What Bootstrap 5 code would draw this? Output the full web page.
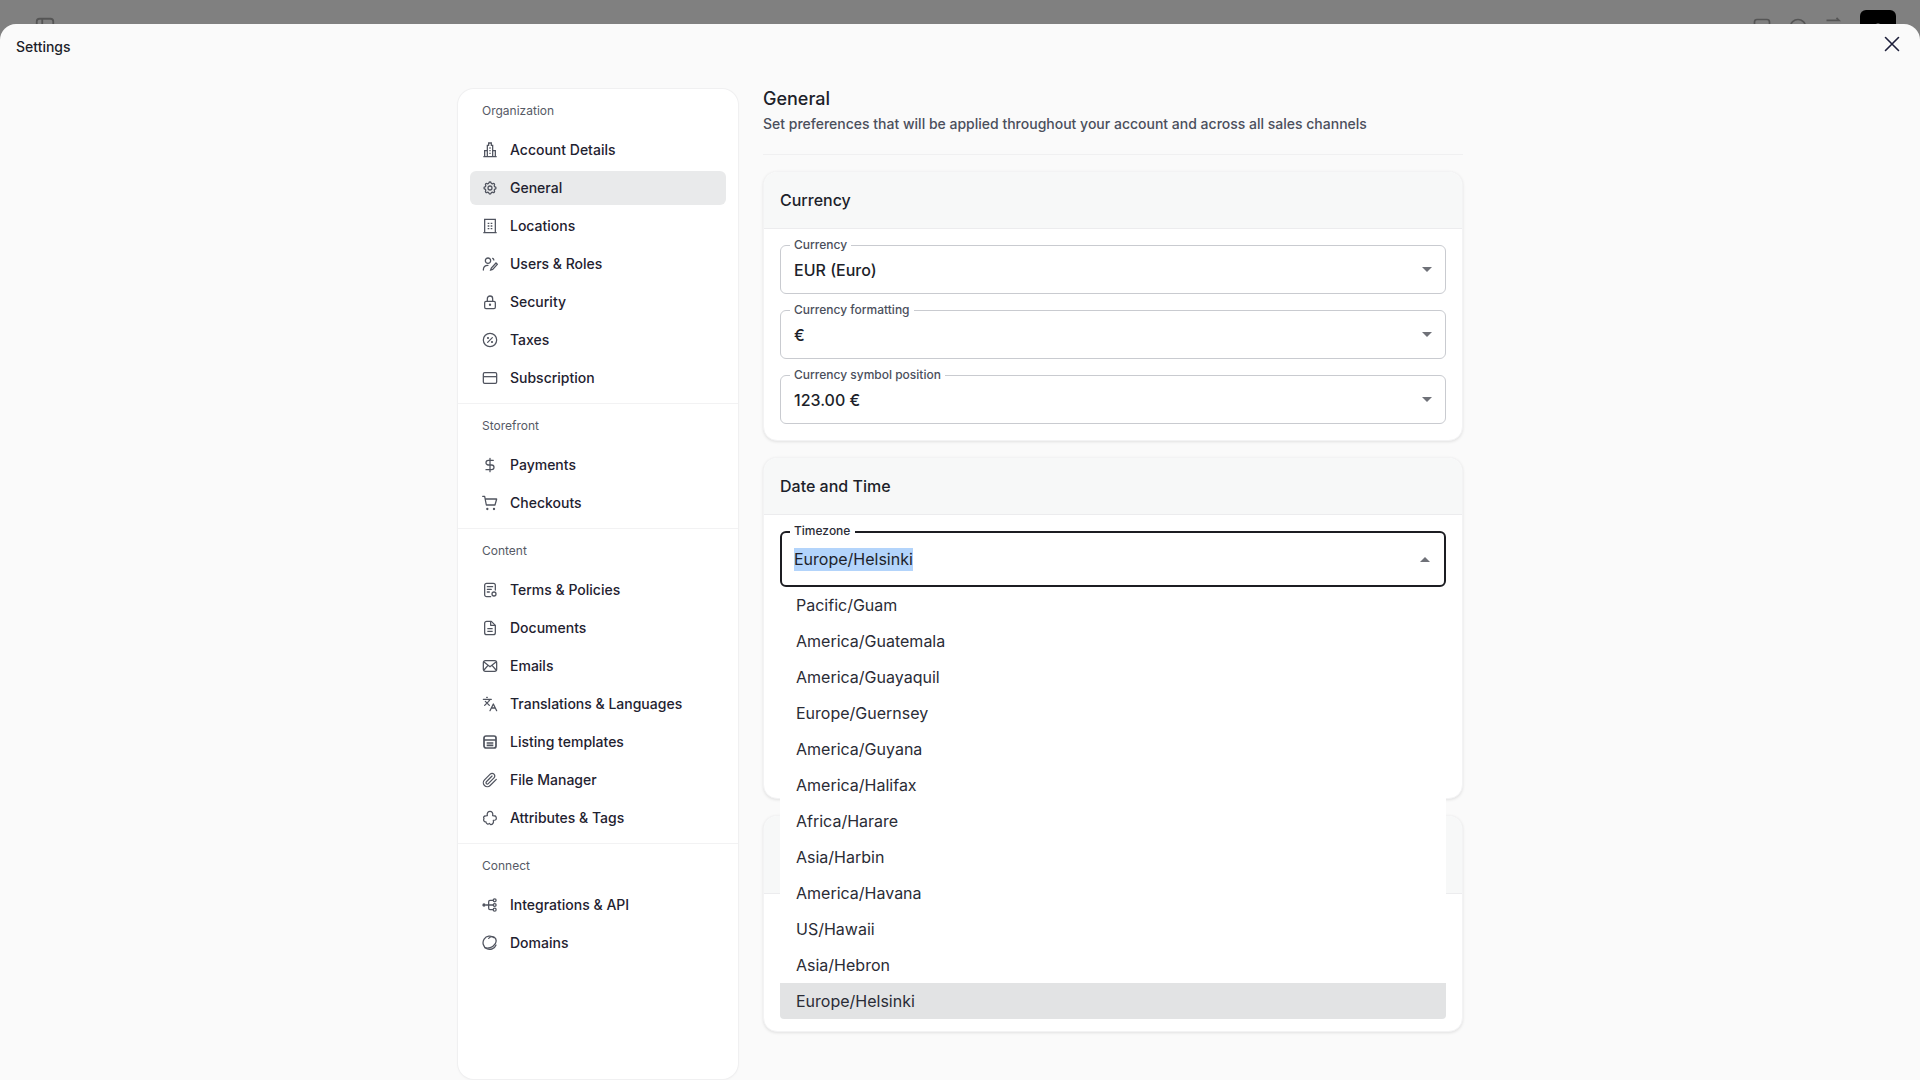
<!doctype html>
<html lang="en">
<head>
<meta charset="utf-8">
<title>Settings</title>
<link href="https://cdn.jsdelivr.net/npm/bootstrap@5.3.0/dist/css/bootstrap.min.css" rel="stylesheet">
<style>
html,body{height:100%;overflow:hidden}
body{background:#808080;font-family:Inter,"Liberation Sans",sans-serif;color:#1d1f2a;font-size:14px}
.backdrop-bar{height:24px;overflow:hidden;padding:0 24px 0 34px;color:#555}
.backdrop-bar .tb{margin-top:17px}
.backdrop-bar .lead-ic{margin-top:16px}
.backdrop-bar .avatar{width:36px;height:36px;margin-top:10px;background:#000;border-radius:6px;color:#bbb;padding-top:9px}
.settings-modal{height:1056px;background:#fafafa;border-radius:16px 16px 0 0;overflow:hidden}
.modal-top{height:65px}
.modal-top .ttl{padding:13px 0 0 16px;font-weight:500;font-size:14px;line-height:20px}
.modal-top .x{margin:8px 16px 0 0;background:none;border:0;padding:0;color:#1d1f3a;line-height:0}
.layout{margin-left:458px;gap:25px}
.side{width:280px;height:990px;background:#fff;border-radius:16px;box-shadow:0 0 0 1px #f0f0f1,0 1px 3px rgba(0,0,0,.05)}
.side section{padding:12px 12px 8px;border-bottom:1px solid #f2f2f3}
.side section:last-child{border-bottom:0}
.side h6{margin:0 0 12px;padding-left:12px;font-size:12px;line-height:20px;font-weight:400;color:#565a66}
.side .nav{gap:4px}
.side .nav-link{height:34px;padding:0 12px;gap:12px;font-size:14px;font-weight:500;color:#1f2230;border-radius:6px;line-height:34px}
.side .nav-link.active{background:#e9eaeb;color:#1f2230}
.side svg{color:#50545f;flex:none;stroke-width:1.9}
.side svg.heavy{stroke-width:2.6}
.main{width:700px}
.main h1{font-size:18px;line-height:24px;font-weight:500;margin:-2px 0 0;color:#1d1f2a}
.main .lede{font-size:14px;line-height:20px;font-weight:500;color:#4b4f5c;margin:3px 0 20px}
.main hr{margin:0 0 16px;border-color:#f0f0f1;opacity:1}
.cards{gap:16px}
.card{border-radius:14px;border-color:#f3f3f4;box-shadow:0 1px 3px rgba(0,0,0,.1);background:#fff;--bs-card-inner-border-radius:13px}
.card-header{height:57px;padding:0 16px;background:#f7f8f8;border-bottom-color:#ececee;font-size:16px;font-weight:500;line-height:56px;color:#1d1f2a}
.card-body{padding:16px}
.fields{gap:16px}
.field{height:49px;border:1px solid #c9cbd0;border-radius:6px;padding:0 13px 0 13px;font-size:16px;line-height:24px;font-weight:500;color:#1d1f2a}
.field label{position:absolute;left:9px;top:-8px;padding:0 4px;background:#fff;font-size:12px;line-height:14px;font-weight:500;color:#4b4f5c}
.field.open{height:56px;border:2px solid #1c1d22;padding:0 14px 0 12px;font-weight:400}
.field.open label{left:8px;top:-9px;color:#2a2c36;padding:0 5px 0 4px}
.tri{width:0;height:0;border-left:5px solid transparent;border-right:5px solid transparent;border-top:5px solid #6f7178;margin-left:auto}
.tri.up{border-top:0;border-bottom:5px solid #6f7178}
.sel{background:#b3d4fb;line-height:23px}
.menu{position:absolute;left:-2px;right:-2px;top:54px;background:#fff;z-index:5;margin:0;border-radius:0 0 4px 4px}
.menu li{height:36px;line-height:36px;padding-left:16px;font-size:16px;color:#2a2c36}
.menu li.on{background:#e2e3e4;border-radius:0 0 4px 4px}
.card-date{height:342px}
.card-extra{height:217px}
.card-extra .card-header{height:78px}
</style>
</head>
<body>
<div class="backdrop-bar d-flex justify-content-between">
  <svg class="lead-ic" width="22" height="22" viewBox="0 0 24 24" fill="none" stroke="currentColor" stroke-width="2"><rect x="3" y="3" width="18" height="18" rx="3"/><path d="M9 3v18"/></svg>
  <div class="d-flex" style="gap:16px">
    <svg class="tb" width="20" height="20" viewBox="0 0 24 24" fill="none" stroke="currentColor" stroke-width="2"><rect x="3" y="3" width="18" height="18" rx="3"/></svg>
    <svg class="tb" width="20" height="20" viewBox="0 0 24 24" fill="none" stroke="currentColor" stroke-width="2"><circle cx="12" cy="12" r="9"/></svg>
    <svg class="tb" width="20" height="20" viewBox="0 0 24 24" fill="none" stroke="currentColor" stroke-width="2"><path d="M3 4h15l-3-3"/></svg>
    <div class="avatar text-center"><svg width="18" height="18" viewBox="0 0 24 24" fill="none" stroke="currentColor" stroke-width="2"><circle cx="12" cy="7" r="4"/></svg></div>
  </div>
</div>

<div class="settings-modal">
  <div class="modal-top d-flex justify-content-between align-items-start">
    <div class="ttl">Settings</div>
    <button class="x" type="button" aria-label="Close"><svg width="24" height="24" viewBox="0 0 24 24" fill="none" stroke="currentColor" stroke-width="1.6" stroke-linecap="round"><path d="M5.500 5.500l13 13M18.500 5.500l-13 13"/></svg></button>
  </div>

  <div class="layout d-flex align-items-start">
    <aside class="side">
      <section>
        <h6>Organization</h6>
        <nav class="nav flex-column">
          <a class="nav-link d-flex align-items-center" href="#"><svg width="16" height="16" viewBox="0 0 24 24" fill="none" stroke="currentColor" stroke-linejoin="miter"><path d="M2 22h20M4 22V13h4M20 22V13h-4M8 22V5h2V1.500h4V5h2v17"/><path d="M11 9h2M11 13h2M11 17h2"/></svg>Account Details</a>
          <a class="nav-link active d-flex align-items-center" href="#"><svg width="16" height="16" viewBox="0 0 24 24" fill="none" stroke="currentColor"><path d="M10.325 4.317c.426-1.756 2.924-1.756 3.35 0a1.724 1.724 0 0 0 2.573 1.066c1.543-.94 3.31.826 2.37 2.37a1.724 1.724 0 0 0 1.065 2.572c1.756.426 1.756 2.924 0 3.35a1.724 1.724 0 0 0-1.066 2.573c.94 1.543-.826 3.31-2.37 2.37a1.724 1.724 0 0 0-2.572 1.065c-.426 1.756-2.924 1.756-3.35 0a1.724 1.724 0 0 0-2.573-1.066c-1.543.94-3.31-.826-2.37-2.37a1.724 1.724 0 0 0-1.065-2.572c-1.756-.426-1.756-2.924 0-3.35a1.724 1.724 0 0 0 1.066-2.573c-.94-1.543.826-3.31 2.37-2.37 1 .608 2.296.07 2.572-1.065z"/><circle cx="12" cy="12" r="3"/></svg>General</a>
          <a class="nav-link d-flex align-items-center" href="#"><svg width="16" height="16" viewBox="0 0 24 24" fill="none" stroke="currentColor"><path d="M2 22h20M4 22V2h16v20"/><path d="M8.500 8h2.500M13 8h2.500M8.500 12h2.500M13 12h2.500M8.500 16h2.500M13 16h2.500"/></svg>Locations</a>
          <a class="nav-link d-flex align-items-center" href="#"><svg width="16" height="16" viewBox="0 0 24 24" fill="none" stroke="currentColor" stroke-linecap="round"><circle cx="9" cy="7" r="4"/><path d="M2 21c0-4 2.500-7 7-7M16 3.500c1 .5 1.600 1.400 1.800 2.500"/><path d="M13 21l1-3 7-7.500 2 2-7 7.500z"/></svg>Users &amp; Roles</a>
          <a class="nav-link d-flex align-items-center" href="#"><svg width="16" height="16" viewBox="0 0 24 24" fill="none" stroke="currentColor"><rect x="4" y="11" width="16" height="11" rx="2"/><path d="M8 11V7a4 4 0 0 1 8 0v4"/><circle cx="12" cy="16" r=".8" fill="currentColor"/></svg>Security</a>
          <a class="nav-link d-flex align-items-center" href="#"><svg width="16" height="16" viewBox="0 0 24 24" fill="none" stroke="currentColor" stroke-linecap="round"><circle cx="12" cy="12" r="10"/><path d="M15.500 8.500l-7 7"/><circle cx="9" cy="9" r=".7" fill="currentColor"/><circle cx="15" cy="15" r=".7" fill="currentColor"/></svg>Taxes</a>
          <a class="nav-link d-flex align-items-center" href="#"><svg width="16" height="16" viewBox="0 0 24 24" fill="none" stroke="currentColor"><rect x="2" y="4" width="20" height="16" rx="2"/><path d="M2 10h20"/></svg>Subscription</a>
        </nav>
      </section>
      <section>
        <h6>Storefront</h6>
        <nav class="nav flex-column">
          <a class="nav-link d-flex align-items-center" href="#"><svg width="16" height="16" viewBox="0 0 24 24" fill="none" stroke="currentColor" stroke-linecap="round"><path d="M12 2v20M17 5H9.500a3.500 3.500 0 0 0 0 7h5a3.500 3.500 0 0 1 0 7H6"/></svg>Payments</a>
          <a class="nav-link d-flex align-items-center" href="#"><svg width="16" height="16" viewBox="0 0 24 24" fill="none" stroke="currentColor" stroke-linecap="round" stroke-linejoin="round"><path d="M1 2h3l2.500 13h13L22 6H5"/><circle cx="8" cy="21" r=".8" fill="currentColor"/><circle cx="18" cy="21" r=".8" fill="currentColor"/></svg>Checkouts</a>
        </nav>
      </section>
      <section>
        <h6>Content</h6>
        <nav class="nav flex-column">
          <a class="nav-link d-flex align-items-center" href="#"><svg width="16" height="16" viewBox="0 0 24 24" fill="none" stroke="currentColor" stroke-linecap="round"><path d="M13 22H7a3 3 0 0 1-3-3V5a3 3 0 0 1 3-3h10a3 3 0 0 1 3 3v7"/><path d="M8 7h8M8 11h6M8 15h3"/><circle cx="18" cy="18" r="3"/></svg>Terms &amp; Policies</a>
          <a class="nav-link d-flex align-items-center" href="#"><svg width="16" height="16" viewBox="0 0 24 24" fill="none" stroke="currentColor" stroke-linejoin="round"><path d="M14 2H7a3 3 0 0 0-3 3v14a3 3 0 0 0 3 3h10a3 3 0 0 0 3-3V8z"/><path d="M13 2v6h7M8 13h8M8 17h8"/></svg>Documents</a>
          <a class="nav-link d-flex align-items-center" href="#"><svg width="16" height="16" viewBox="0 0 24 24" fill="none" stroke="currentColor"><rect x="2" y="4" width="20" height="16" rx="3"/><path d="M3 6l9 7 9-7M3 18l6-7M21 18l-6-7"/></svg>Emails</a>
          <a class="nav-link d-flex align-items-center" href="#"><svg width="16" height="16" viewBox="0 0 24 24" fill="none" stroke="currentColor" stroke-linecap="round" stroke-linejoin="round"><path d="M5 8l6 6M4 14l6-6 2-3M2 5h12M7 2h1M22 22l-5-10-5 10M14 18h6"/></svg>Translations &amp; Languages</a>
          <a class="nav-link d-flex align-items-center" href="#"><svg class="heavy" width="16" height="16" viewBox="0 0 24 24" fill="none" stroke="currentColor"><rect x="3" y="3" width="18" height="18" rx="3"/><path d="M3 9h18M7 13.500h10M7 17h10"/></svg>Listing templates</a>
          <a class="nav-link d-flex align-items-center" href="#"><svg width="16" height="16" viewBox="0 0 24 24" fill="none" stroke="currentColor" stroke-linecap="round" stroke-linejoin="round"><path d="M21.440 11.050l-9.190 9.190a6 6 0 0 1-8.490-8.490l8.570-8.570A4 4 0 1 1 18 8.840l-8.590 8.570a2 2 0 0 1-2.830-2.830l8.490-8.480"/></svg>File Manager</a>
          <a class="nav-link d-flex align-items-center" href="#"><svg width="16" height="16" viewBox="0 0 24 24" fill="none" stroke="currentColor" stroke-linejoin="round"><path d="M8 8.500C7 4 9.500 2 12 2s5 2 4 6.500L20 9c2 2 2 5 0 6l-3 .5c1 3.500-1 6.500-4 6.500l-2-2c-2 2-4.500 1-5-2-3 0-4.500-3-3-5-1.500-2 0-4 2-4z"/></svg>Attributes &amp; Tags</a>
        </nav>
      </section>
      <section>
        <h6>Connect</h6>
        <nav class="nav flex-column">
          <a class="nav-link d-flex align-items-center" href="#"><svg width="16" height="16" viewBox="0 0 24 24" fill="none" stroke="currentColor"><circle cx="3" cy="12" r="1.500" fill="currentColor"/><circle cx="19" cy="5" r="2.200"/><circle cx="19" cy="12" r="2.200"/><circle cx="19" cy="19" r="2.200"/><path d="M5 12h12M10 12V7a2 2 0 0 1 2-2h5M10 12v5a2 2 0 0 0 2 2h5"/></svg>Integrations &amp; API</a>
          <a class="nav-link d-flex align-items-center" href="#"><svg width="16" height="16" viewBox="0 0 24 24" fill="none" stroke="currentColor" stroke-linecap="round"><path d="M18 4a10 10 0 1 0 3 11"/><path d="M4 19c5 2 12 0 16-6 2-4 1-8-2-10-3-1-6 0-8 2"/></svg>Domains</a>
        </nav>
      </section>
    </aside>

    <main class="main">
      <h1>General</h1>
      <p class="lede">Set preferences that will be applied throughout your account and across all sales channels</p>
      <hr>
      <div class="cards d-flex flex-column">
        <div class="card">
          <div class="card-header">Currency</div>
          <div class="card-body fields d-flex flex-column">
            <div class="field position-relative d-flex align-items-center"><label>Currency</label><span>EUR (Euro)</span><i class="tri"></i></div>
            <div class="field position-relative d-flex align-items-center"><label>Currency formatting</label><span>€</span><i class="tri"></i></div>
            <div class="field position-relative d-flex align-items-center"><label>Currency symbol position</label><span>123.00 €</span><i class="tri"></i></div>
          </div>
        </div>
        <div class="card card-date">
          <div class="card-header">Date and Time</div>
          <div class="card-body">
            <div class="field open position-relative d-flex align-items-center">
              <label>Timezone</label><span class="sel">Europe/Helsinki</span><i class="tri up"></i>
              <ul class="menu list-unstyled">
                <li>Pacific/Guam</li>
                <li>America/Guatemala</li>
                <li>America/Guayaquil</li>
                <li>Europe/Guernsey</li>
                <li>America/Guyana</li>
                <li>America/Halifax</li>
                <li>Africa/Harare</li>
                <li>Asia/Harbin</li>
                <li>America/Havana</li>
                <li>US/Hawaii</li>
                <li>Asia/Hebron</li>
                <li class="on">Europe/Helsinki</li>
              </ul>
            </div>
          </div>
        </div>
        <div class="card card-extra">
          <div class="card-header"></div>
        </div>
      </div>
    </main>
  </div>
</div>
<script src="https://cdn.jsdelivr.net/npm/bootstrap@5.3.0/dist/js/bootstrap.bundle.min.js"></script>
</body>
</html>
